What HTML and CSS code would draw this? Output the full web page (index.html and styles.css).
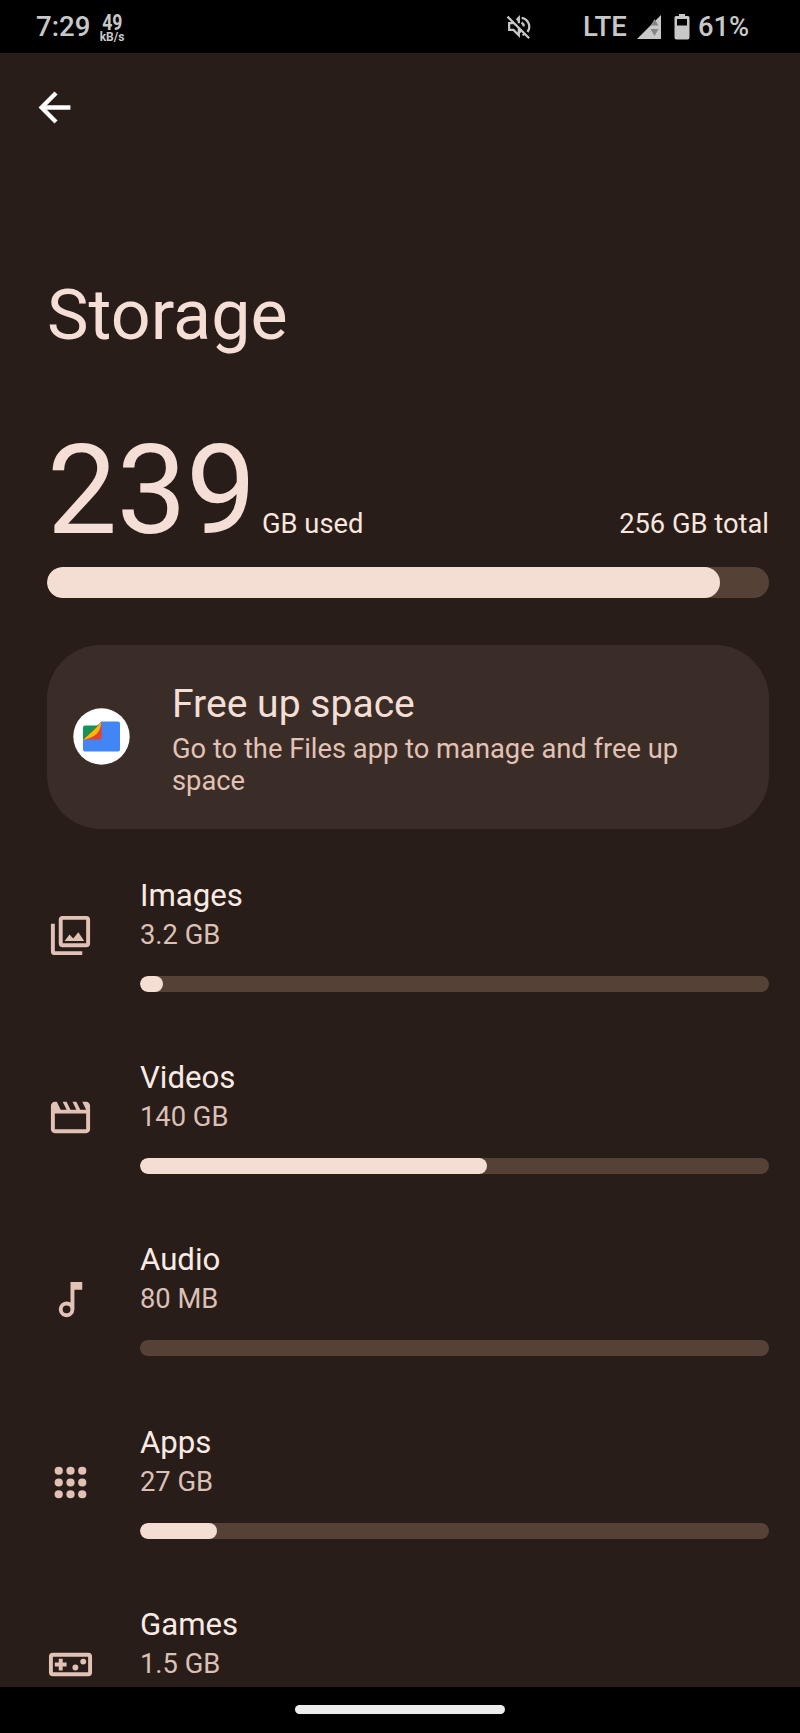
FILE: index.html
```html
<!DOCTYPE html>
<html lang="en">
<head>
<meta charset="utf-8">
<title>Storage</title>
<link rel="stylesheet" href="styles.css">
</head>
<body>
<div class="screen">
  <header class="status">
    <span class="clock">7:29</span>
    <span class="speed"><b>49</b><small>kB/s</small></span>
    <svg class="mute" viewBox="0 0 24 24" width="27" height="27"><path fill="none" stroke="currentColor" stroke-width="2" d="M2.200 3.200 21.500 22.500M8.500 8.900H3.700v6.200h3.800l4.800 4.700v-6.300M12.300 9V4.300l-2 2M14.800 4.300a8 8 0 0 1 5.200 12.600M14.700 8.400a4 4 0 0 1 1.900 3.500M12.400 15.500l2.200 1.200M15.500 19.500l2-.8"/></svg>
    <span class="net">LTE</span>
    <svg class="signal" viewBox="0 0 24 24" width="24" height="24"><path fill="#c8c8c8" d="M0 24 24 0v24z"/><path fill="#858585" d="M13.500 10.600 17.500 4l4 6.600zM13.500 14h8l-4 7z"/></svg>
    <svg class="battery" viewBox="0 0 16 26" width="16" height="26"><path fill="#c8c8c8" fill-rule="evenodd" d="M5 0h6v2h3q1.500 0 1.500 1.500v20q0 2-2 2h-11q-2 0-2-2v-20Q.5 2 2 2h3zM3 5v6.500h10V5z"/></svg>
    <span class="pct">61%</span>
  </header>

  <main class="page">
    <svg class="back" viewBox="0 0 24 24" width="47" height="47"><path fill="#fff" stroke="#fff" stroke-width=".25" d="M20 11H7.830l5.590-5.590L12 4l-8 8 8 8 1.410-1.410L7.830 13H20z"/></svg>
    <h1 class="title">Storage</h1>

    <section class="usage">
      <div class="figures"><span class="big">239</span><span class="used">GB used</span><span class="total">256 GB total</span></div>
      <div class="bar bar-main"><div class="fill" style="width:673px"></div></div>
    </section>

    <section class="card">
      <svg class="files" viewBox="0 0 57 57" width="57" height="57"><circle cx="28.500" cy="28.500" r="28.200" fill="#fff"/><path fill="#4285f4" d="M28.300 13.500H45q2 0 2 2v26q0 2-2 2H12q-2 0-2-2V31z"/><path fill="#159456" d="M12 17.500h15.500L10 32V19.500q0-2 2-2z"/><path fill="#e2452f" d="M28.600 14.500V30q0 1.500-1.500 1.500H10z"/><path fill="#fbbc04" d="M28.300 13.300Q26 17.500 20 23L10 32q10-2.500 14-6.500 3.800-4 4.300-12.200z"/></svg>
      <div class="card-text"><h2>Free up space</h2><p>Go to the Files app to manage and free up space</p></div>
    </section>

    <ul class="list">
      <li class="row">
        <svg class="icon" viewBox="0 0 24 24"><path fill-rule="evenodd" d="M8 2h12q2 0 2 2v12q0 2-2 2H8q-2 0-2-2V4q0-2 2-2zm0 2v12h12V4zM2 6h2v14h14v2H4q-2 0-2-2zM9 14.800l2.500-3.300 1.900 2 2.600-3.200 3 4.500z"/></svg>
        <div class="info"><h3>Images</h3><p>3.2 GB</p><div class="bar"><div class="fill" style="width:22.500px"></div></div></div>
      </li>
      <li class="row">
        <svg class="icon" viewBox="0 0 24 24"><path d="M18 4l2 4h-3l-2-4h-2l2 4h-3l-2-4H8l2 4H7L5 4H4c-1.100 0-1.990.9-1.990 2L2 18c0 1.100.9 2 2 2h16c1.100 0 2-.9 2-2V6c0-1.100-.9-2-2-2zm2 14H4v-8h16z"/></svg>
        <div class="info"><h3>Videos</h3><p>140 GB</p><div class="bar"><div class="fill" style="width:347px"></div></div></div>
      </li>
      <li class="row">
        <svg class="icon" viewBox="0 0 24 24"><path fill-rule="evenodd" d="M12 3v10.550A4 4 0 1 0 14 17V7h4V3zm-2 16a2 2 0 1 1 0-4 2 2 0 0 1 0 4z"/></svg>
        <div class="info"><h3>Audio</h3><p>80 MB</p><div class="bar"></div></div>
      </li>
      <li class="row">
        <svg class="icon" viewBox="0 0 24 24"><g><circle cx="6" cy="6" r="2.100"/><circle cx="12" cy="6" r="2.100"/><circle cx="18" cy="6" r="2.100"/><circle cx="6" cy="12" r="2.100"/><circle cx="12" cy="12" r="2.100"/><circle cx="18" cy="12" r="2.100"/><circle cx="6" cy="18" r="2.100"/><circle cx="12" cy="18" r="2.100"/><circle cx="18" cy="18" r="2.100"/></g></svg>
        <div class="info"><h3>Apps</h3><p>27 GB</p><div class="bar"><div class="fill" style="width:77px"></div></div></div>
      </li>
      <li class="row">
        <svg class="icon" viewBox="0 0 24 24"><path fill-rule="evenodd" d="M3 6h18q2 0 2 2v8q0 2-2 2H3q-2 0-2-2V8q0-2 2-2zm0 2v8h18V8zM6 9h2v2h2v2H8v2H6v-2H4v-2h2z"/><circle cx="14.500" cy="13.500" r="1.500"/><circle cx="18.500" cy="10.500" r="1.500"/></svg>
        <div class="info"><h3>Games</h3><p>1.5 GB</p><div class="bar"><div class="fill" style="width:12px"></div></div></div>
      </li>
    </ul>
  </main>

  <footer class="nav"><div class="handle"></div></footer>
</div>
</body>
</html>
```
FILE: styles.css
```css
* { box-sizing: border-box; margin: 0; padding: 0; }
body { background: #000; font-family: Roboto, sans-serif; }
svg { display: block; flex: none; }
h1, h2, h3 { font-weight: 400; }
.screen { width: 800px; height: 1733px; overflow: hidden; display: flex; flex-direction: column; }

.status { height: 53px; flex: none; display: flex; align-items: center; padding-left: 36px; color: #c8c8c8; font-size: 27.3px; font-weight: 500; }
.clock { width: 63px; font-size: 27.6px; }
.speed { width: 26px; padding-top: 4px; display: flex; flex-direction: column; align-items: center; }
.speed b { font-size: 21.5px; line-height: 17px; font-weight: 700; transform: scaleX(.82); }
.speed small { font-size: 12px; line-height: 13px; font-weight: 700; }
.mute { margin-left: 380px; }
.net { margin-left: 51px; width: 54px; font-size: 27.6px; }
.signal { margin-top: 1px; }
.battery { margin-left: 13px; }
.pct { margin-left: 8px; }

.page { height: 1634px; flex: none; overflow: hidden; background: #281d19; padding: 31px 31px 0 47px; }
.back { margin-left: -16px; }
.title { margin-top: 143px; font-size: 70px; line-height: 82px; color: #f5ded5; }
.usage { margin-top: 62px; }
.figures { display: flex; align-items: baseline; height: 149px; color: #f5ded5; }
.big { font-size: 125px; line-height: 146px; width: 215px; letter-spacing: -0.8px; }
.used, .total { font-size: 27.3px; line-height: 32px; color: #f9e6de; }
.total { margin-left: auto; }
.bar { height: 16px; border-radius: 8px; background: #554136; overflow: hidden; }
.fill { height: 100%; border-radius: inherit; background: #f4ded4; }
.bar-main { height: 31px; border-radius: 16px; }

.card { margin-top: 47px; height: 184px; border-radius: 54px; background: #3a2d27; display: flex; align-items: center; padding-left: 26px; }
.files { margin-top: -1px; }
.card-text { margin-left: 42px; width: 540px; padding-top: 4px; }
.card h2 { font-size: 39.1px; line-height: 46px; color: #f5ded5; }
.card p { margin-top: 6px; font-size: 27.3px; line-height: 32px; color: #e3c2b6; }

.list { list-style: none; }
.row { height: 182.2px; display: flex; padding-top: 48px; }
.icon { width: 47px; height: 47px; margin: 35px 46.5px 0 -0.5px; fill: #e3c2b6; }
.info { flex: 1; }
.row h3 { font-size: 31.2px; line-height: 37px; color: #fbeae3; }
.row p { margin-top: 5px; font-size: 27.3px; line-height: 32px; color: #dcc0b6; }
.row .bar { margin-top: 25px; }

.nav { flex: 1; display: flex; justify-content: center; padding-top: 18px; }
.handle { width: 210px; height: 9px; border-radius: 5px; background: #ededed; }
```
